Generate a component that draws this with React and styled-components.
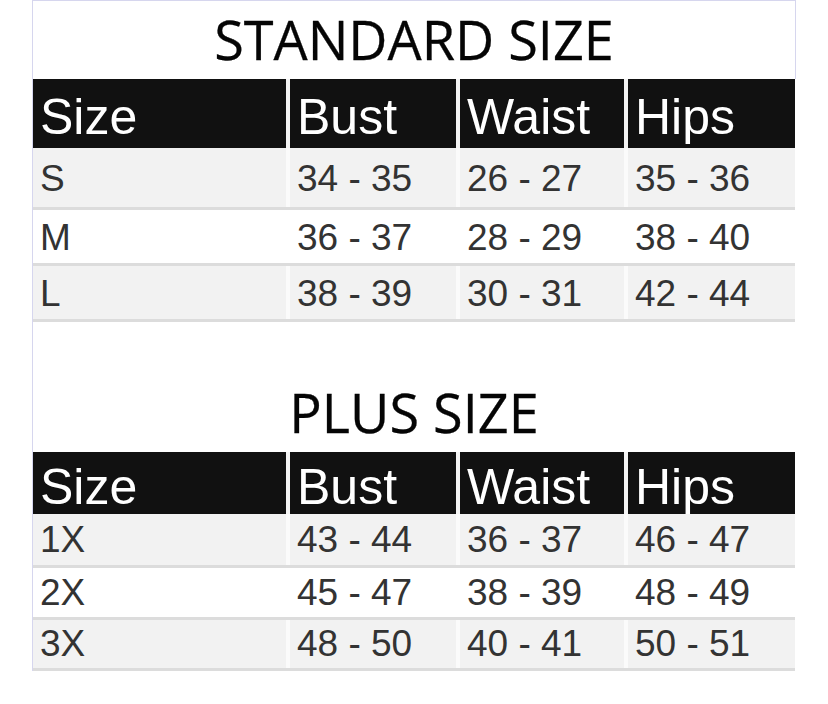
import React from 'react';
import styled, { createGlobalStyle } from 'styled-components';

const GlobalStyle = createGlobalStyle`
  html, body {
    margin: 0;
    padding: 0;
    background: #ffffff;
  }
`;

const Sheet = styled.div`
  margin-left: 32px;
  width: 762px;
  border-left: 1px solid #d6d6ee;
  display: flex;
  flex-direction: column;
  font-family: 'Liberation Sans', Arial, sans-serif;
`;

const Title = styled.div`
  height: ${(p) => p.$height}px;
  box-sizing: border-box;
  display: flex;
  align-items: center;
  justify-content: center;
  padding-bottom: 2px;
  font-family: 'Open Sans', sans-serif;
  font-size: 54px;
  color: #050505;
  -webkit-text-stroke: 0.3px #050505;
  border-top: ${(p) => (p.$boxed ? '1px solid #d6d6ee' : 'none')};
  border-right: ${(p) => (p.$boxed ? '1px solid #d6d6ee' : 'none')};
  margin-right: ${(p) => (p.$boxed ? '-1px' : '0')};
`;

const Row = styled.div`
  display: grid;
  grid-template-columns: 253px 166px 164px 167px;
  column-gap: 4px;
  height: ${(p) => p.$height}px;
  box-sizing: border-box;
  border-bottom: ${(p) => (p.$head ? 'none' : '3px solid #dcdcdc')};
  background: ${(p) => (p.$head ? '#f4f4f4' : p.$shade ? '#fbfbfb' : '#ffffff')};
`;

const Cell = styled.div`
  display: flex;
  align-items: center;
  padding-left: 7px;
  background: ${(p) => (p.$head ? '#111111' : p.$shade ? '#f2f2f2' : '#ffffff')};
  color: ${(p) => (p.$head ? '#ffffff' : '#333333')};
  font-size: ${(p) => (p.$head ? 50 : 37)}px;
  padding-top: ${(p) => p.$lift}px;
  white-space: nowrap;
`;

const Spacer = styled.div`
  height: 51px;
`;

const heads = ['Size', 'Bust', 'Waist', 'Hips'];

const standard = [
  ['S', '34 - 35', '26 - 27', '35 - 36'],
  ['M', '36 - 37', '28 - 29', '38 - 40'],
  ['L', '38 - 39', '30 - 31', '42 - 44'],
];

const plus = [
  ['1X', '43 - 44', '36 - 37', '46 - 47'],
  ['2X', '45 - 47', '38 - 39', '48 - 49'],
  ['3X', '48 - 50', '40 - 41', '50 - 51'],
];

const SizeTable = ({ title, rows, headHeight, rowHeights, lift, boxed }) => (
  <>
    <Title $height={79} $boxed={boxed}>{title}</Title>
    <Row $head $height={headHeight}>
      {heads.map((h) => (
        <Cell key={h} $head $lift={6}>{h}</Cell>
      ))}
    </Row>
    {rows.map((r, i) => (
      <Row key={r[0]} $height={rowHeights[i]} $shade={i % 2 === 0}>
        {r.map((v, j) => (
          <Cell key={j} $shade={i % 2 === 0} $lift={lift}>{v}</Cell>
        ))}
      </Row>
    ))}
  </>
);

export default function App() {
  return (
    <>
      <GlobalStyle />
      <Sheet>
        <SizeTable
          title="STANDARD SIZE"
          rows={standard}
          headHeight={69}
          rowHeights={[62, 56, 56]}
          lift={2}
          boxed
        />
        <Spacer />
        <SizeTable
          title="PLUS SIZE"
          rows={plus}
          headHeight={62}
          rowHeights={[54, 52, 51]}
          lift={0}
        />
      </Sheet>
    </>
  );
}
